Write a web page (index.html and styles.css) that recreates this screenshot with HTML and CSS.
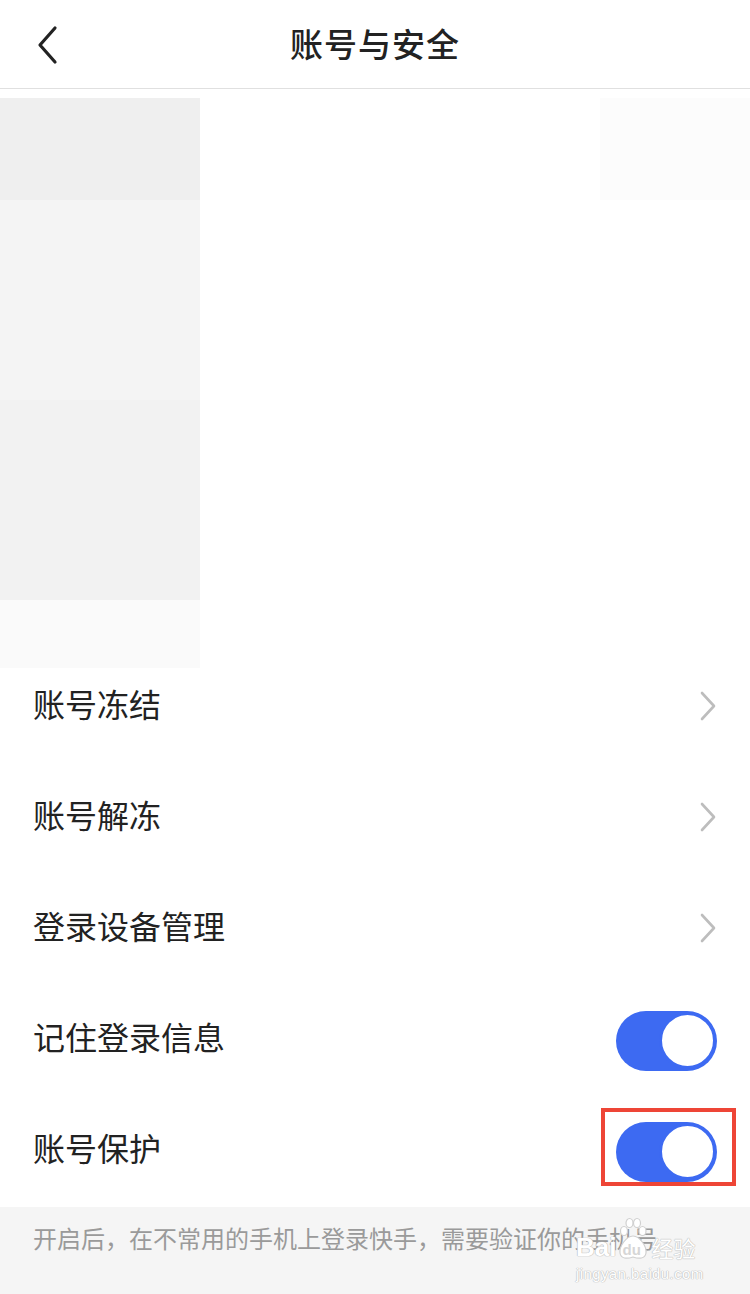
FILE: index.html
```html
<!DOCTYPE html>
<html lang="zh-CN">
<head>
<meta charset="utf-8">
<title>账号与安全</title>
<link rel="stylesheet" href="styles.css">
</head>
<body>
<div class="page">
  <header class="topbar">
    <span class="back">
      <svg width="24" height="40" viewBox="0 0 24 40"><path d="M19 3 L4 20 L19 37" fill="none" stroke="#222" stroke-width="3.2" stroke-linecap="round" stroke-linejoin="round"/></svg>
    </span>
    <h1 class="title">账号与安全</h1>
  </header>

  <section class="masked">
    <div class="mask-col">
      <div class="mask m1"></div>
      <div class="mask m2"></div>
      <div class="mask m3"></div>
      <div class="mask m4"></div>
    </div>
    <div class="mask-right"></div>
  </section>

  <ul class="list">
    <li class="row"><span class="label">账号冻结</span><span class="chev"><svg width="18" height="30" viewBox="0 0 18 30"><path d="M3 2 L15 15 L3 28" fill="none" stroke="#bdbdbd" stroke-width="2.6" stroke-linecap="round" stroke-linejoin="round"/></svg></span></li>
    <li class="row"><span class="label">账号解冻</span><span class="chev"><svg width="18" height="30" viewBox="0 0 18 30"><path d="M3 2 L15 15 L3 28" fill="none" stroke="#bdbdbd" stroke-width="2.6" stroke-linecap="round" stroke-linejoin="round"/></svg></span></li>
    <li class="row"><span class="label">登录设备管理</span><span class="chev"><svg width="18" height="30" viewBox="0 0 18 30"><path d="M3 2 L15 15 L3 28" fill="none" stroke="#bdbdbd" stroke-width="2.6" stroke-linecap="round" stroke-linejoin="round"/></svg></span></li>
    <li class="row"><span class="label">记住登录信息</span><span class="toggle"><span class="knob"></span></span></li>
    <li class="row"><span class="label">账号保护</span><span class="toggle marked"><span class="knob"></span><span class="highlight"></span></span></li>
  </ul>

  <footer class="note">
    <p class="note-text">开启后，在不常用的手机上登录快手，需要验证你的手机号</p>
    <div class="watermark">
      <div class="wm-top">
        <span class="wm-bai">Bai</span>
        <span class="wm-paw">
          <svg class="paw-svg" width="32" height="44" viewBox="0 0 32 44">
            <g fill="#fff" stroke="#d0d0d0" stroke-width="1.2">
              <ellipse cx="7" cy="14" rx="3.5" ry="4.5"/>
              <ellipse cx="12.5" cy="6" rx="3.5" ry="4.5"/>
              <ellipse cx="20" cy="6" rx="3.5" ry="4.5"/>
              <ellipse cx="25.5" cy="14" rx="3.5" ry="4.5"/>
              <path d="M16 19 C9 19 2 30 3 36 C4 42 10 42 16 40 C22 42 28 42 29 36 C30 30 23 19 16 19 Z"/>
            </g>
          </svg>
          <span class="wm-du">du</span>
        </span>
        <span class="wm-cn">经验</span>
      </div>
      <div class="wm-url">jingyan.baidu.com</div>
    </div>
  </footer>
</div>
</body>
</html>
```

FILE: styles.css
```css
* { box-sizing: border-box; margin: 0; padding: 0; }
html, body { background: #fff; }
body {
  width: 750px;
  height: 1294px;
  overflow: hidden;
  font-family: "Noto Sans CJK SC", "Noto Sans", sans-serif;
  color: #222;
}
.page { width: 750px; }

.topbar {
  position: relative;
  height: 89px;
  border-bottom: 1px solid #e0e0e0;
  display: flex;
  align-items: center;
  justify-content: center;
}
.back {
  position: absolute;
  left: 36px;
  top: 25px;
  display: flex;
}
.title {
  font-size: 33px;
  font-weight: 500;
  color: #222;
  letter-spacing: 1px;
  line-height: 1;
  margin-top: -2px;
}

.masked {
  height: 563px;
  display: flex;
  justify-content: space-between;
  align-items: flex-start;
}
.mask-col {
  width: 200px;
  margin-top: 9px;
  display: flex;
  flex-direction: column;
}
.mask { width: 200px; }
.m1 { height: 102px; background: #efefef; }
.m2 { height: 200px; background: #f4f4f4; }
.m3 { height: 200px; background: #f2f2f2; }
.m4 { height: 68px; background: #fafafa; }
.mask-right {
  width: 150px;
  height: 102px;
  margin-top: 9px;
  background: #fcfcfc;
}

.list { list-style: none; }
.row {
  height: 111px;
  display: flex;
  align-items: center;
  justify-content: space-between;
  padding: 0 33px 0 33px;
}
.label {
  font-size: 32px;
  line-height: 1;
  color: #222;
  margin-bottom: 9px;
}
.chev { display: flex; margin-bottom: 4px; }

.toggle {
  position: relative;
  width: 101px;
  height: 60px;
  border-radius: 30px;
  background: #3d6af2;
  display: flex;
  align-items: center;
  justify-content: flex-end;
  padding-right: 1px;
}
.knob {
  width: 57px;
  height: 57px;
  border-radius: 50%;
  background: #fff;
  border: 3px solid #3d6af2;
}
.highlight {
  position: absolute;
  left: -15px;
  top: -14px;
  width: 135px;
  height: 78px;
  border: 4px solid #ee4536;
}

.note {
  position: relative;
  height: 88px;
  background: #f5f5f5;
  padding: 14px 33px 0;
}
.note-text {
  font-size: 24px;
  line-height: 34px;
  color: #9a9a9a;
  white-space: nowrap;
}
.watermark {
  position: absolute;
  left: 576px;
  top: 6px;
  width: 140px;
  color: #fff;
  font-family: "Liberation Sans", "Noto Sans CJK SC", sans-serif;
  text-shadow: 0 0 1px #bdbdbd, 0 0 1px #bdbdbd, 0 0 1px #bdbdbd;
}
.wm-top {
  display: flex;
  align-items: flex-end;
  height: 48px;
}
.wm-bai {
  font-size: 26px;
  line-height: 28px;
  font-weight: 700;
}
.wm-paw {
  position: relative;
  width: 32px;
  height: 44px;
  margin-left: 1px;
  display: flex;
}
.wm-du {
  position: absolute;
  left: 5px;
  bottom: 3px;
  font-size: 15px;
  line-height: 16px;
  font-weight: 700;
  color: #d6d6d6;
  text-shadow: none;
}
.wm-cn {
  font-size: 22px;
  line-height: 28px;
  margin-left: 2px;
  font-family: "Noto Sans CJK SC", sans-serif;
}
.wm-url {
  font-size: 15px;
  line-height: 18px;
  margin-top: 4px;
  letter-spacing: 0.4px;
}
```
